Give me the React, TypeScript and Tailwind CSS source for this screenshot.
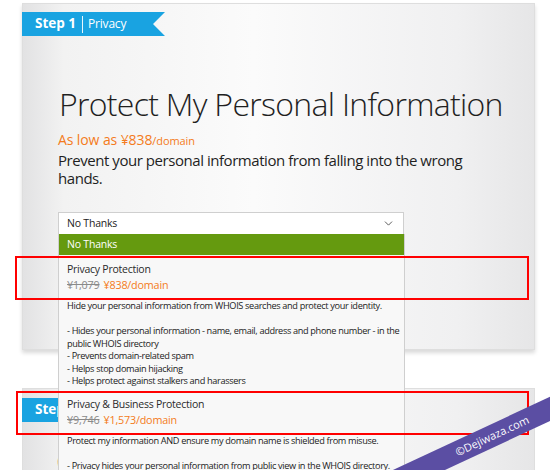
import { ChevronDown } from "lucide-react";

const font = { fontFamily: '"Open Sans", "Noto Sans", sans-serif' };

const plans = [
  {
    name: "Privacy Protection",
    was: "¥1,079",
    now: "¥838/domain",
    lines: [
      "Hide your personal information from WHOIS searches and protect your identity.",
      "",
      "- Hides your personal information - name, email, address and phone number - in the",
      "public WHOIS directory",
      "- Prevents domain-related spam",
      "- Helps stop domain hijacking",
      "- Helps protect against stalkers and harassers",
    ],
  },
  {
    name: "Privacy & Business Protection",
    was: "¥9,746",
    now: "¥1,573/domain",
    lines: [
      "Protect my information AND ensure my domain name is shielded from misuse.",
      "",
      "- Privacy hides your personal information from public view in the WHOIS directory.",
    ],
  },
];

function Ribbon({ step, label }: { step: string; label: string }) {
  return (
    <div className="flex h-[24px] w-[143px] items-center bg-[#19a3e1] pl-[13px] text-white [clip-path:polygon(0_0,100%_0,calc(100%_-_12px)_50%,100%_100%,0_100%)]">
      <span className="text-[13.5px] font-bold leading-none">{step}</span>
      <span className="ml-[6px] mr-[5px] h-[17px] w-px bg-white/90" />
      <span className="text-[12px] leading-none tracking-[-0.2px]">{label}</span>
    </div>
  );
}

function Dropdown() {
  return (
    <div className="absolute left-[-1px] top-full z-10 w-[347px] border-x border-[#cfcfcf] bg-[#f8f8f8]">
      <div className="flex h-[21px] items-center bg-[#659a0f] pl-[8px] text-[10.5px] tracking-[-0.2px] text-white">
        No Thanks
      </div>
      {plans.map((p) => (
        <div key={p.name} className="pl-[8px] pb-[2px] pt-[6px] text-[#2a2a2a]">
          <div className="text-[10.5px] leading-[16px] tracking-[-0.25px]">{p.name}</div>
          <div className="text-[10.8px] leading-[16px] tracking-[-0.2px]">
            <span className="text-[#8a8a8a] line-through">{p.was}</span>
            <span className="ml-[4px] text-[#f47b20]">{p.now}</span>
          </div>
          <div className="mt-[7px] text-[9.2px] leading-[12.5px] tracking-[-0.35px] text-[#222]">
            {p.lines.map((l, i) => (
              <div key={i} className="h-[12.5px] whitespace-nowrap">
                {l}
              </div>
            ))}
          </div>
        </div>
      ))}
    </div>
  );
}

export default function App() {
  return (
    <div className="relative h-[470px] w-[550px] overflow-hidden bg-white" style={font}>
      {/* step 1 card */}
      <div className="relative z-[1] ml-[22px] mt-[3px] h-[347px] w-[513px] border border-[#dedede] bg-[linear-gradient(to_right,#e2e2e3,#f2f2f2_8%,#fbfbfb_45%,#f0f0f1_85%,#e6e6e7)] pt-[8px] shadow-[0_3px_4px_rgba(0,0,0,0.15)]">
        <div className="-ml-px">
          <Ribbon step="Step 1" label="Privacy" />
        </div>
        <div className="pl-[35px] text-[#1f1f1f]">
          <h1 className="ml-px mt-[48px] text-[32px] font-light leading-[40px] tracking-[-0.7px] whitespace-nowrap">
            Protect My Personal Information
          </h1>
          <div className="mt-[6px] text-[14px] leading-[20px] tracking-[-0.1px] text-[#f47b20]">
            As low as ¥838<span className="text-[11px]">/domain</span>
          </div>
          <p className="w-[420px] text-[15px] leading-[18px] tracking-[-0.45px]">
            Prevent your personal information from falling into the wrong hands.
          </p>

          <div className="relative mt-[25px] flex h-[23px] w-[346px] items-center justify-between border border-[#cfcfcf] bg-white pl-[8px] pr-[8px] text-[10.5px] tracking-[-0.2px] text-[#222]">
            <span>No Thanks</span>
            <ChevronDown size={13} strokeWidth={1.6} className="text-[#444]" />
            <Dropdown />
          </div>
        </div>
      </div>

      {/* step 2 card */}
      <div className="ml-[22px] mt-[38px] h-[120px] w-[513px] border border-[#dedede] bg-[linear-gradient(to_right,#e2e2e3,#f2f2f2_8%,#fbfbfb_45%,#f0f0f1_85%,#e6e6e7)] pt-[9px]">
        <div className="-ml-px">
          <Ribbon step="Step 2" label="Options" />
        </div>
        <div className="mt-[19px] pl-[33px] text-[32px] font-light leading-[40px] text-[#111]">
          Choose
        </div>
      </div>

      {/* highlight boxes */}
      <div className="absolute left-[15px] top-[256px] z-20 h-[44px] w-[514px] border-2 border-[#f00]" />
      <div className="absolute left-[16px] top-[391px] z-20 h-[44px] w-[513px] border-2 border-[#f00]" />

      {/* watermark */}
      <div className="absolute left-[344px] top-[424px] z-30 flex h-[22px] w-[300px] rotate-[-25deg] items-center bg-[#5b4ea3] pl-[108px] text-[11px] text-white">
        ©Dejiwaza.com
      </div>
    </div>
  );
}
